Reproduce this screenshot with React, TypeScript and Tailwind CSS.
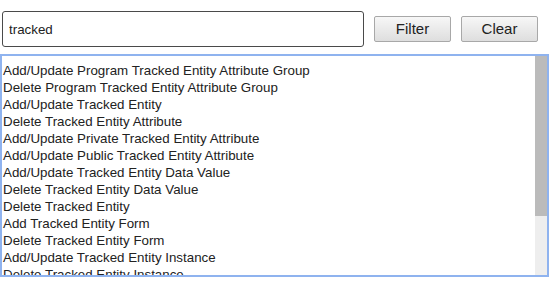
import { useState } from "react"

const items = [
  "Add/Update Program Tracked Entity Attribute Group",
  "Delete Program Tracked Entity Attribute Group",
  "Add/Update Tracked Entity",
  "Delete Tracked Entity Attribute",
  "Add/Update Private Tracked Entity Attribute",
  "Add/Update Public Tracked Entity Attribute",
  "Add/Update Tracked Entity Data Value",
  "Delete Tracked Entity Data Value",
  "Delete Tracked Entity",
  "Add Tracked Entity Form",
  "Delete Tracked Entity Form",
  "Add/Update Tracked Entity Instance",
  "Delete Tracked Entity Instance",
]

function App() {
  const [query, setQuery] = useState("tracked")

  return (
    <div className="w-[551px] h-[296px] bg-white font-['Liberation_Sans',Arial,sans-serif] text-[#222]">
      <div className="flex items-center pt-[11px] pl-[2px]">
        <input
          type="text"
          value={query}
          onChange={(e) => setQuery(e.target.value)}
          className="w-[362px] h-[36px] px-[6px] text-[13.33px] text-[#222] border border-[#4a4a4a] rounded-[3px] outline-none"
        />
        <button className="ml-[10px] w-[77px] h-[26px] text-[15px] text-[#222] border border-[#a8a8a8] rounded-[2px] bg-gradient-to-b from-[#f7f7f7] to-[#dedede]">
          Filter
        </button>
        <button className="ml-[10px] w-[77px] h-[26px] text-[15px] text-[#222] border border-[#a8a8a8] rounded-[2px] bg-gradient-to-b from-[#f7f7f7] to-[#dedede]">
          Clear
        </button>
      </div>
      <div className="mt-[7px] w-[549px] h-[223px] flex border-2 border-[#8fb3ef] overflow-hidden">
        <ul className="flex-1 pt-[6px] pl-[1px] text-[13.33px] leading-[17px]">
          {items.map((item) => (
            <li key={item} className="whitespace-nowrap">{item}</li>
          ))}
        </ul>
        <div className="w-[12px] flex flex-col bg-[#eeeeee]">
          <div className="h-[160px] bg-[#bbbbbb]" />
        </div>
      </div>
    </div>
  )
}

export default App
